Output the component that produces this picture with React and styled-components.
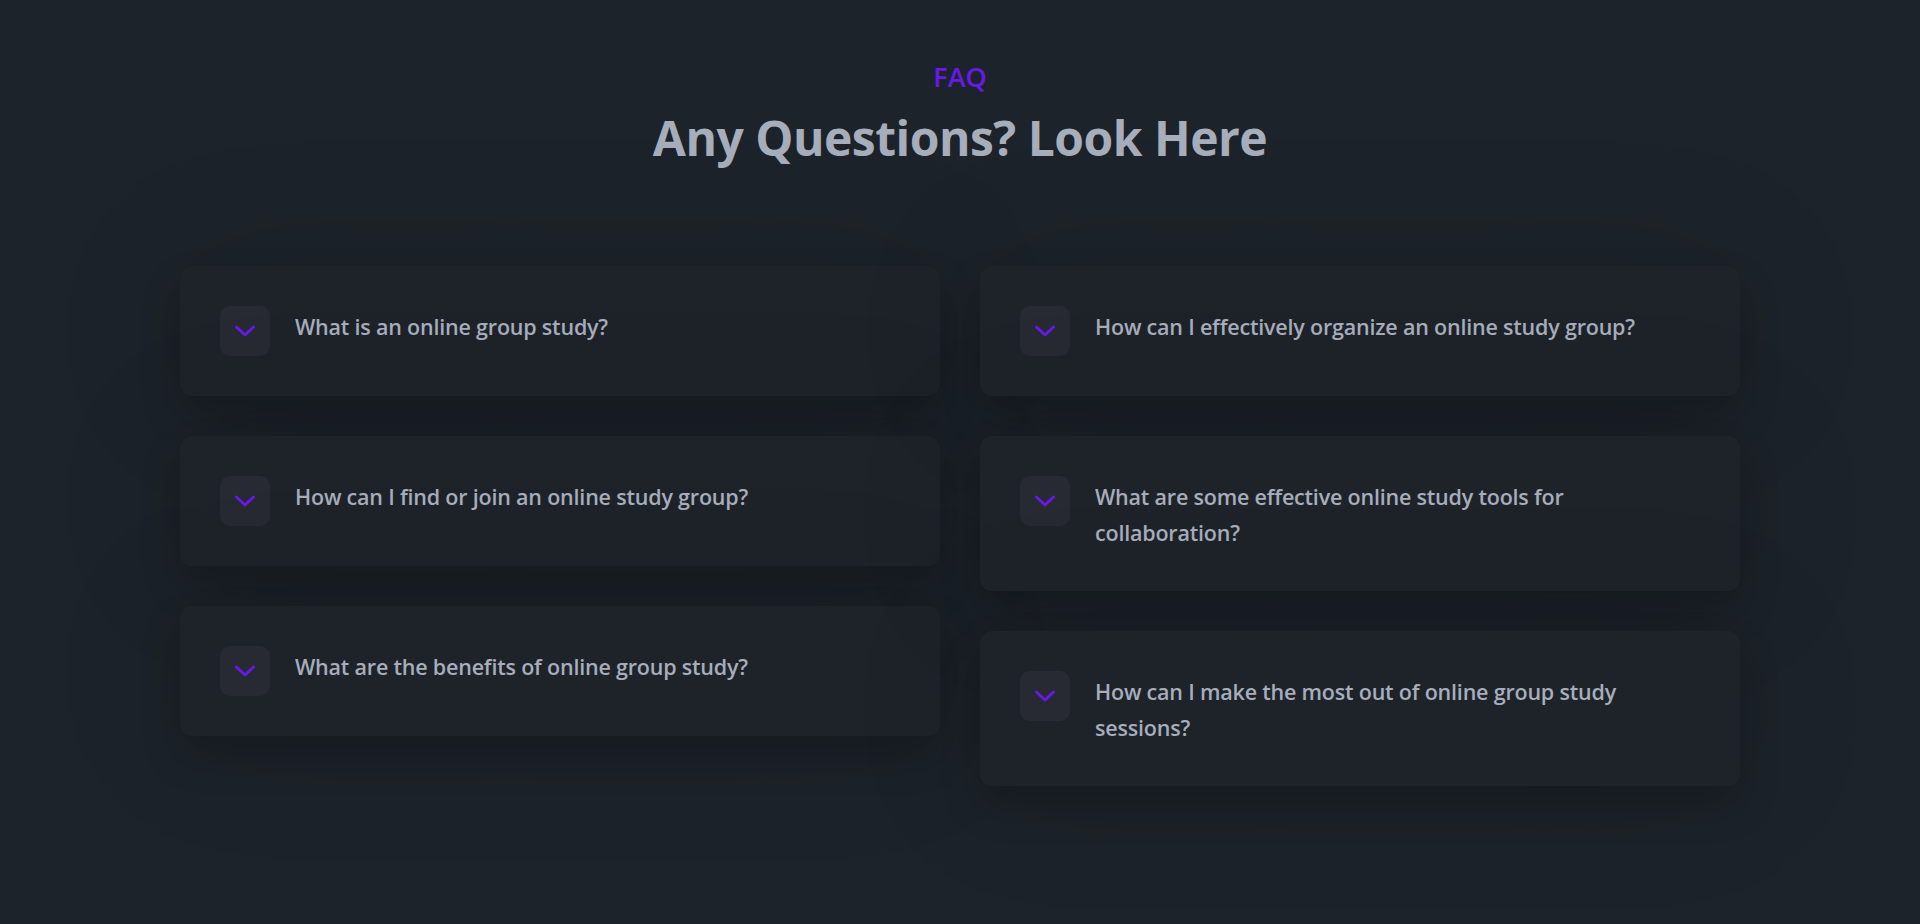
import React from "react"
import styled, { createGlobalStyle } from "styled-components"

const questions = {
  left: [
    "What is an online group study?",
    "How can I find or join an online study group?",
    "What are the benefits of online group study?",
  ],
  right: [
    "How can I effectively organize an online study group?",
    "What are some effective online study tools for collaboration?",
    "How can I make the most out of online group study sessions?",
  ],
}

function Chevron() {
  return (
    <svg width="22" height="12" viewBox="0 0 22 12" fill="none">
      <path
        d="M2.5 2 L11 10 L19.5 2"
        stroke="#661ae6"
        strokeWidth="3"
        strokeLinecap="round"
        strokeLinejoin="round"
      />
    </svg>
  )
}

function FaqItem({ text }) {
  return (
    <Card>
      <IconBox>
        <Chevron />
      </IconBox>
      <Question>{text}</Question>
    </Card>
  )
}

export default function App() {
  return (
    <>
      <GlobalStyle />
      <Section>
        <Header>
          <Eyebrow>FAQ</Eyebrow>
          <Title>Any Questions? Look Here</Title>
        </Header>
        <Grid>
          <Column>
            {questions.left.map((q) => (
              <FaqItem key={q} text={q} />
            ))}
          </Column>
          <Column>
            {questions.right.map((q) => (
              <FaqItem key={q} text={q} />
            ))}
          </Column>
        </Grid>
      </Section>
    </>
  )
}

const GlobalStyle = createGlobalStyle`
  html, body {
    margin: 0;
    background: #1d232a;
  }
  body {
    font-family: "Open Sans", "Noto Sans", sans-serif;
    color: #a6adbb;
  }
`

const Section = styled.section`
  min-height: 924px;
  box-sizing: border-box;
  padding: 59px 0 80px;
  background: #1d232a;
  overflow: hidden;
`

const Header = styled.div`
  display: flex;
  flex-direction: column;
  align-items: center;
  gap: 15px;
`

const Eyebrow = styled.p`
  margin: 0;
  font-size: 27px;
  line-height: 36px;
  font-weight: 600;
  color: #661ae6;
`

const Title = styled.h2`
  margin: 0;
  font-size: 48px;
  line-height: 56px;
  font-weight: 700;
  letter-spacing: -0.5px;
  color: #a6adbb;
`

const Grid = styled.div`
  max-width: 1560px;
  margin: 100px auto 0;
  display: grid;
  grid-template-columns: 1fr 1fr;
  gap: 40px;
  align-items: start;
`

const Column = styled.div`
  display: flex;
  flex-direction: column;
  gap: 40px;
`

const Card = styled.div`
  display: flex;
  align-items: flex-start;
  gap: 25px;
  padding: 40px;
  border-radius: 12px;
  background: #1e232a;
  box-shadow: 0 20px 40px rgba(0, 0, 0, 0.18), 0 0 140px rgba(0, 0, 0, 0.12);
`

const IconBox = styled.div`
  flex: none;
  width: 50px;
  height: 50px;
  border-radius: 10px;
  background: #272a33;
  display: flex;
  align-items: center;
  justify-content: center;
`

const Question = styled.p`
  margin: 0;
  padding-top: 3px;
  font-size: 21.5px;
  line-height: 36px;
  font-weight: 600;
  letter-spacing: -0.2px;
  color: #a6adbb;
`
